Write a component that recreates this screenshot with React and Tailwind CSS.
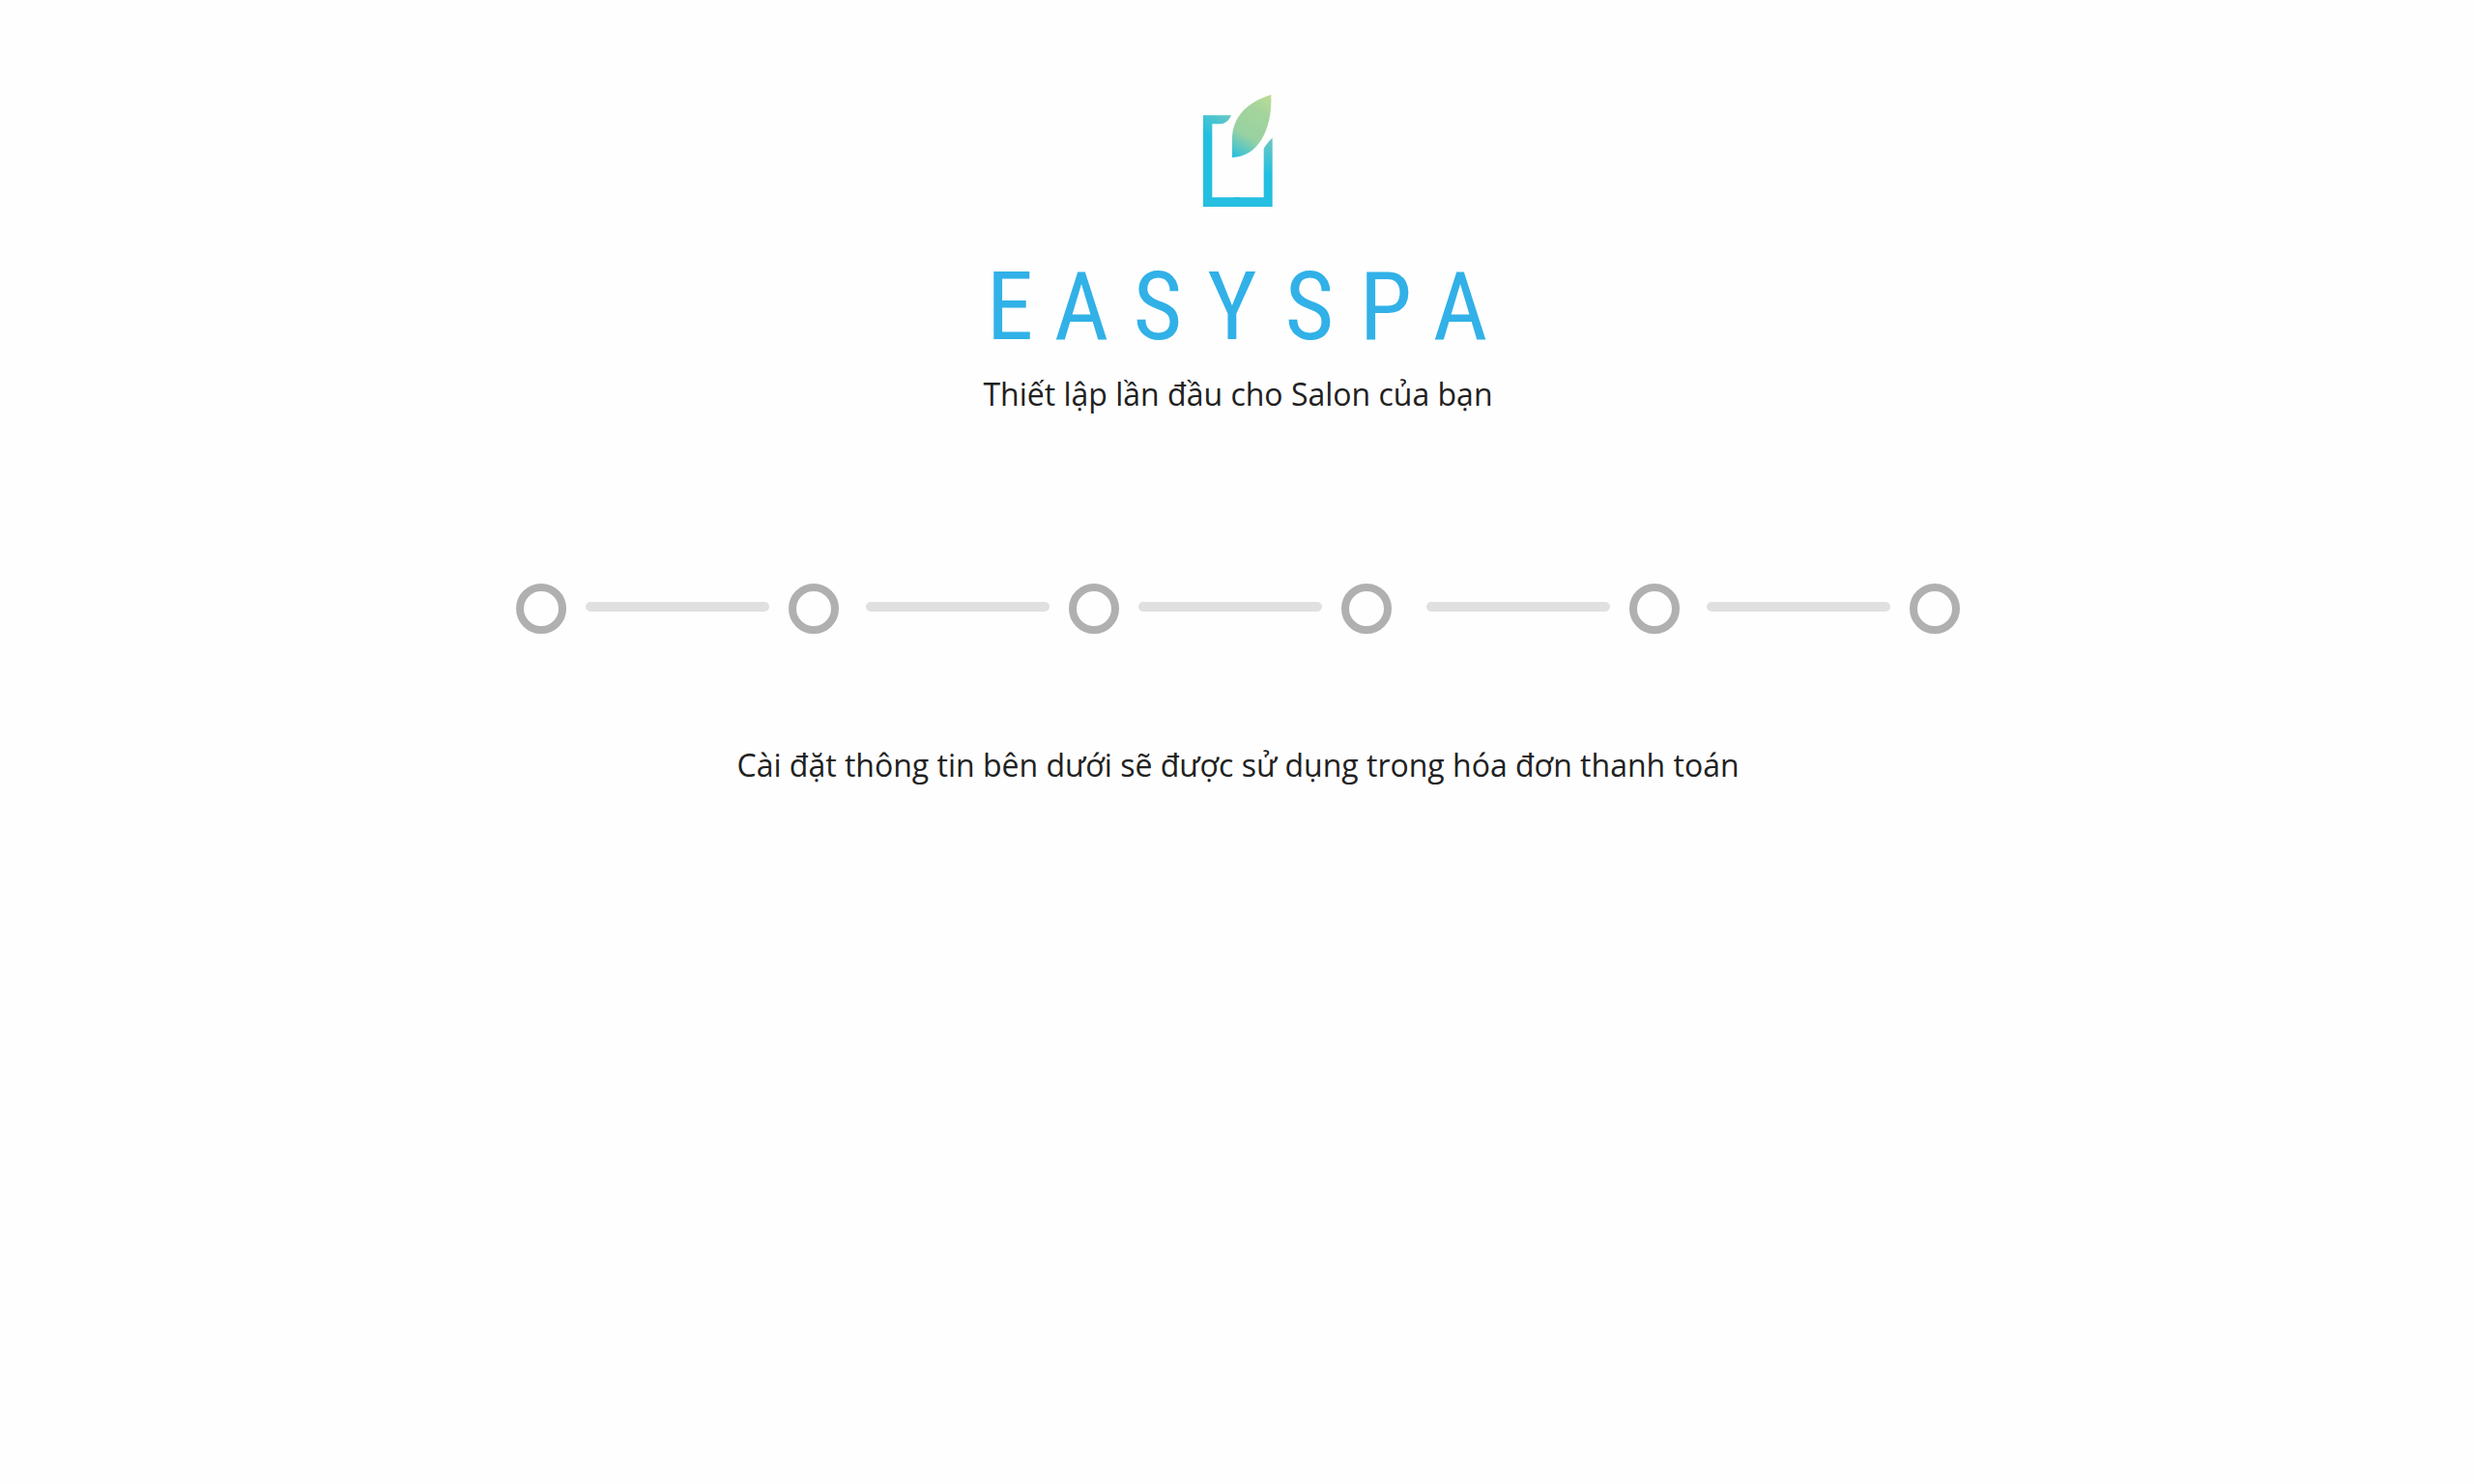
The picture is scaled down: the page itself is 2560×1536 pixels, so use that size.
const wordmark = [
  { letter: "E", width: "w-[68px]" },
  { letter: "A", width: "w-[80px]" },
  { letter: "S", width: "w-[78px]" },
  { letter: "Y", width: "w-[76px]" },
  { letter: "S", width: "w-[84px]" },
  { letter: "P", width: "w-[74px]" },
  { letter: "A", width: "w-[80px]" },
];

const steps = [
  { id: 1, gap: "ml-5" },
  { id: 2, gap: "ml-7" },
  { id: 3, gap: "ml-5" },
  { id: 4, gap: "ml-9" },
  { id: 5, gap: "ml-7" },
  { id: 6, gap: null },
];

function LogoMark() {
  return (
    <svg className="h-[116px] w-[72px]" viewBox="76 54 216 348" aria-hidden="true">
      <defs>
        <linearGradient id="frame" gradientUnits="userSpaceOnUse" x1="180" y1="118" x2="120" y2="200">
          <stop offset="0" stopColor="#72c9c0" />
          <stop offset="1" stopColor="#24bfe0" />
        </linearGradient>
        <linearGradient id="edge" gradientUnits="userSpaceOnUse" x1="278" y1="190" x2="278" y2="300">
          <stop offset="0" stopColor="#6cc7c2" />
          <stop offset="1" stopColor="#24bfe0" />
        </linearGradient>
        <linearGradient id="leaf" gradientUnits="userSpaceOnUse" x1="166" y1="249" x2="275" y2="54">
          <stop offset="0" stopColor="#24bfe0" />
          <stop offset="0.36" stopColor="#98d1a2" />
          <stop offset="0.75" stopColor="#a4d49c" />
          <stop offset="1" stopColor="#bcdc94" />
        </linearGradient>
      </defs>
      <path fill="url(#frame)" d="M76 118H163C156 134 145 144 128 145H104V373H190V402H76Z" />
      <path fill="url(#edge)" d="M291 188V402H170V373H264V222C270 210 280 198 291 188Z" />
      <path fill="url(#leaf)" d="M287 54C291 165 246 246 166 249V195C165 122 215 76 287 54Z" />
    </svg>
  );
}

function Stepper() {
  return (
    <ol className="mt-[172px] flex items-start">
      {steps.map((step) => (
        <li key={step.id} className="flex items-center" aria-label={`${step.id}`}>
          <span className="size-[52px] rounded-full border-8 border-[#b0b0b0]" />
          {step.gap && (
            <span className={`${step.gap} mr-5 mb-1 h-2.5 w-[190px] rounded-full bg-[#e0e0e0]`} />
          )}
        </li>
      ))}
    </ol>
  );
}

export default function App() {
  return (
    <main className="flex min-h-screen flex-col items-center bg-[#fefefe] pt-[98px] pl-0.5 font-['Open_Sans','Noto_Sans',sans-serif] text-[32px] leading-[48px] text-[#212121]">
      <LogoMark />
      <h1
        aria-label="EASYSPA"
        className="mt-14 flex font-['Liberation_Sans_Narrow','Roboto_Condensed','Liberation_Sans',sans-serif] text-[98px] leading-[96px] text-[#31b1e7]"
      >
        {wordmark.map((item, index) => (
          <span key={index} className={`${item.width} text-center`}>
            {item.letter}
          </span>
        ))}
      </h1>
      <p className="mt-[18px]">Thiết lập lần đầu cho Salon của bạn</p>
      <Stepper />
      <p className="mt-28">Cài đặt thông tin bên dưới sẽ được sử dụng trong hóa đơn thanh toán</p>
    </main>
  );
}
